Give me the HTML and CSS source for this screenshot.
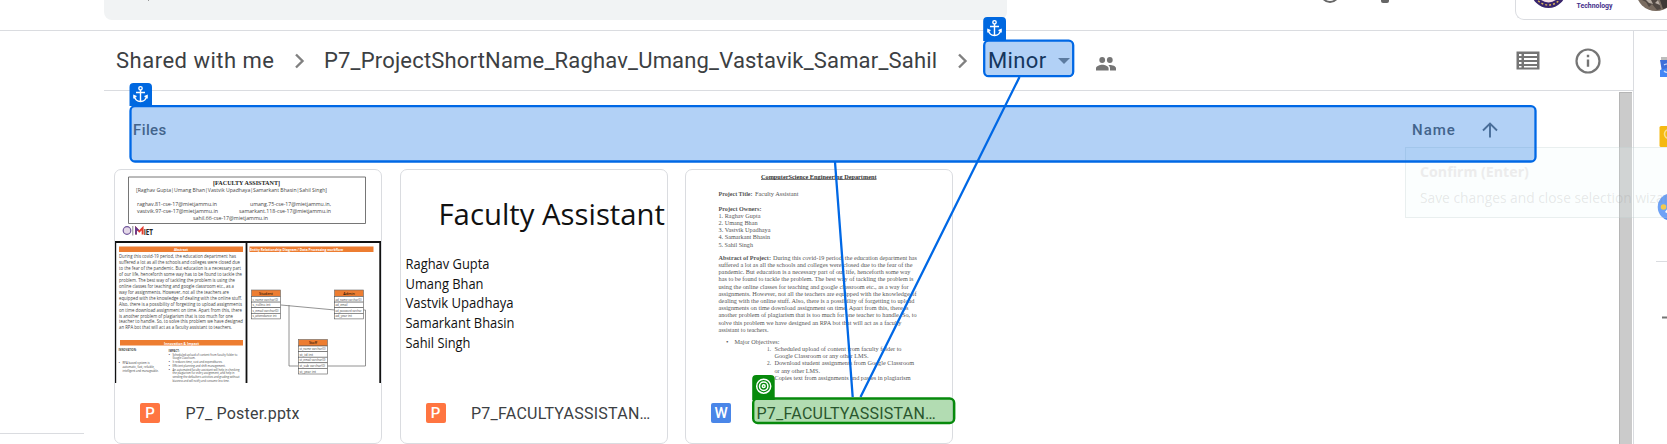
FILE: index.html
```html
<!DOCTYPE html>
<html lang="en">
<head>
<meta charset="utf-8">
<title>Minor - Drive</title>
<link rel="stylesheet" href="styles.css">
</head>
<body>
<header class="top">
  <div class="search"><i class="cursor"></i></div>
  <svg class="top-icons" width="90" height="6" viewBox="1310 0 90 6"><circle cx="1330" cy="-7" r="9" fill="none" stroke="#666" stroke-width="2"/><path d="M1381 0v1q0 2 2 2h4q2 0 2-2v-1" fill="#666"/></svg>
  <div class="account">
    <svg width="152" height="19" viewBox="1515 0 152 19">
      <circle cx="1547.500" cy="-9.500" r="17.500" fill="#38246c"/>
      <circle cx="1547.500" cy="-9.500" r="14.500" fill="none" stroke="#d9b45a" stroke-width="1.500" stroke-dasharray="2 2"/>
      <circle cx="1547.500" cy="-9.500" r="12" fill="#f4dfe4"/>
      <text x="1575.500" y="7.500" textLength="36" lengthAdjust="spacingAndGlyphs" class="logo-text">Technology</text>
      <circle cx="1655" cy="-9" r="20" fill="#796c60"/>
      <path d="M1641 0l4 2 3 5 3-3 5 6 4-1-3-9z" fill="#4f4741"/><path d="M1645 0h5l2 4-4-1zM1654 3l3-3 2 5z" fill="#b6aca2"/><path d="M1659 0h8v7l-5 2z" fill="#3f3936"/>
    </svg>
  </div>
</header>
<div class="body">
  <aside class="nav"><div class="nav-rule"></div></aside>
  <main class="main">
    <div class="crumbs">
      <span class="crumb c1">Shared with me</span>
      <svg class="chev" width="10" height="16" viewBox="0 0 10 16"><path d="M1 1.500L7.500 8 1 14.500" fill="none" stroke="#808080" stroke-width="2.400"/></svg>
      <span class="crumb c2">P7_ProjectShortName_Raghav_Umang_Vastavik_Samar_Sahil</span>
      <svg class="chev" width="10" height="16" viewBox="0 0 10 16"><path d="M1 1.500L7.500 8 1 14.500" fill="none" stroke="#808080" stroke-width="2.400"/></svg>
      <span class="crumb c3">Minor</span>
      <svg class="caret" width="12" height="6" viewBox="0 0 12 6"><path d="M0 0h12L6 6z" fill="#858585"/></svg>
      <svg class="people" width="20" height="14" viewBox="0 0 20 14"><g fill="#757575"><circle cx="6.200" cy="3" r="2.900"/><circle cx="13.800" cy="3" r="2.900"/><path d="M0 13.500v-2.200C0 9 4 7.800 6.300 7.800s6.300 1.200 6.300 3.500v2.200zM14 13.500v-2.200c0-1.400-.7-2.500-1.700-3.300C15.500 7.600 20 8.800 20 11.300v2.200z"/></g></svg>
      <span class="spacer"></span>
      <svg width="24" height="19" viewBox="0 0 24 19"><path d="M.5.500h23v18H.5z" fill="#757575"/><path d="M3 3h2.500v2H3zM8 3h13v2H8zM3 7h2.500v2H3zM8 7h13v2H8zM3 11h2.500v2H3zM8 11h13v2H8zM3 15h2.500v1.500H3zM8 15h13v1.500H8z" fill="#fff"/></svg>
      <svg class="info" width="26" height="26" viewBox="0 0 26 26"><circle cx="13" cy="13" r="11.500" fill="none" stroke="#757575" stroke-width="2.200"/><path d="M11.800 6.800h2.400v2.400h-2.400zM11.800 11.600h2.400v7.200h-2.400z" fill="#757575"/></svg>
    </div>
    <div class="content">
      <div class="list">
        <div class="list-head">
          <span class="files">Files</span><span class="name">Name</span>
          <svg width="16" height="16" viewBox="0 0 16 16"><path d="M8 15.500V2M1 8.500L8 1.500l7 7" fill="none" stroke="#69717b" stroke-width="1.900"/></svg>
        </div>
        <div class="cards">
          <article class="card">
            <svg class="thumb" viewBox="115 170 266 213" id="poster"></svg>
            <div class="label"><b class="type ppt">P</b><span class="file f1">P7_ Poster.pptx</span></div>
          </article>
          <article class="card">
            <svg class="thumb calibri" viewBox="401 170 266 213" fill="#111">
              <text x="438.500" y="224.500" font-size="29.500" textLength="226.500" lengthAdjust="spacingAndGlyphs">Faculty Assistant</text>
              <g font-size="13.700"><text x="405.500" y="269" textLength="84" lengthAdjust="spacingAndGlyphs">Raghav Gupta</text>
              <text x="405.500" y="288.500" textLength="78" lengthAdjust="spacingAndGlyphs">Umang Bhan</text>
              <text x="405.500" y="308" textLength="108" lengthAdjust="spacingAndGlyphs">Vastvik Upadhaya</text>
              <text x="405.500" y="327.700" textLength="109" lengthAdjust="spacingAndGlyphs">Samarkant Bhasin</text>
              <text x="405.500" y="347.500" textLength="65" lengthAdjust="spacingAndGlyphs">Sahil Singh</text></g>
            </svg>
            <div class="label"><b class="type ppt">P</b><span class="file f2">P7_FACULTYASSISTAN…</span></div>
          </article>
          <article class="card">
            <svg class="thumb" viewBox="686 170 266 213" id="report"></svg>
            <div class="label"><b class="type doc">W</b><span class="file f2">P7_FACULTYASSISTAN…</span></div>
          </article>
        </div>
      </div>
      <div class="scroll"></div>
    </div>
  </main>
  <aside class="side">
    <svg width="33" height="413" viewBox="1634 31 33 413">
      <path d="M1661 57h6v5h-6z" fill="#bdbdbd"/><path d="M1660 60h7v17h-6.500l1-8z" fill="#3f6fd9"/><path d="M1660 70l7-2v9h-7z" fill="#4486f5"/><path d="M1664 65q3-2 4 0M1664 71q2 2 4 1" fill="none" stroke="#cfe0ff" stroke-width="1.200"/>
      <rect x="1659.500" y="126" width="20" height="21" rx="1.500" fill="#f5b912"/><circle cx="1669" cy="134" r="4.500" fill="none" stroke="#fbe08f" stroke-width="1.500"/>
      <circle cx="1671.500" cy="207" r="13.800" fill="#4f8df5"/><circle cx="1663.500" cy="207" r="2.800" fill="#f6bf26"/><path d="M1665 212l3-4v6z" fill="#fff"/>
      <path d="M1656 261.500h11" stroke="#dadce0"/><path d="M1662 317.500h5" stroke="#757575" stroke-width="2"/>
    </svg>
  </aside>
</div>
<div class="tip"><b>Confirm (Enter)</b><span>Save changes and close selection wizard</span></div>
<svg class="overlay" width="1667" height="444" viewBox="0 0 1667 444">
  <defs><g id="anchor" fill="none" stroke="#fff" stroke-width="1.400"><circle cx="0" cy="-6.200" r="1.700"/><path d="M0-4.500V7M-4.500-2h9M-6 1.500C-5.500 5-3 7 0 7s5.500-2 6-5.500M-6.600 4v-3l2.600 1.200M6.600 4v-3L4 2.200"/></g></defs>
  <g stroke="#0068e5" stroke-width="2.300">
    <rect x="130.500" y="106.200" width="1405" height="55.300" rx="4.500" fill="#0068e0" fill-opacity=".3"/>
    <rect x="984.200" y="40.700" width="89" height="35.500" rx="4.500" fill="#0068e0" fill-opacity=".3"/>
    <path d="M835 162L852.700 397M1019.500 77L860.500 397"/>
  </g>
  <path d="M129.500 106V87q0-4 4-4h14.500q4 0 4 4v19zM983.200 41V21q0-4 4-4h14.800q4 0 4 4v20z" fill="#0068e0"/>
  <use href="#anchor" x="140.500" y="94.500"/><use href="#anchor" x="994.500" y="28.500"/>
  <rect x="753.200" y="398.500" width="201" height="24.500" rx="4.500" fill="#008a00" fill-opacity=".3" stroke="#078a0c" stroke-width="2.400"/>
  <path d="M752.200 400v-21q0-4 4-4h14.500q4 0 4 4v21z" fill="#078a0c"/>
  <g fill="none" stroke="#fff" stroke-width="1.500"><circle cx="763.700" cy="386.200" r="7"/><circle cx="763.700" cy="386.200" r="4.200"/><circle cx="763.700" cy="386.200" r="1.400"/></g>
</svg>
<script src="thumbs.js"></script>
</body>
</html>
```
FILE: styles.css
```css
* { box-sizing: border-box; }
body { margin: 0; width: 1667px; height: 444px; overflow: hidden; background: #fff; font-family: Roboto, sans-serif; display: flex; flex-direction: column; position: relative; }
svg { display: block; flex: none; }
.top { height: 31px; flex: none; border-bottom: 1px solid #dadce0; display: flex; align-items: flex-start; padding-left: 104px; }
.search { width: 903px; height: 20px; background: #f1f3f4; border-radius: 0 0 8px 8px; padding-left: 44px; }
.cursor { display: block; width: 1px; height: 1px; background: #999; }
.top-icons { margin-left: 303px; }
.account { margin-left: 115px; width: 152px; height: 20px; border: solid #dadce0; border-width: 0 0 1px 1px; border-radius: 0 0 0 9px; overflow: hidden; }
.logo-text { font: bold 6.5px Roboto, sans-serif; fill: #45308b; }
.body { flex: 1; display: flex; min-height: 0; }
.nav { width: 104px; display: flex; align-items: flex-end; padding-bottom: 10px; }
.nav-rule { width: 84px; height: 1px; background: #dadce0; }
.main { width: 1530px; border-right: 1px solid #dadce0; display: flex; flex-direction: column; }
.crumbs { height: 60px; flex: none; border-bottom: 1px solid #dadce0; display: flex; align-items: center; padding-left: 12px; }
.crumb { font-size: 22px; line-height: 28px; color: #3c4043; white-space: nowrap; flex: none; }
.c1 { width: 179px; letter-spacing: .5px; }
.c2 { width: 612px; margin-left: 19px; letter-spacing: .18px; }
.c2 + .chev { margin-left: 22px; }
.c3 { margin-left: 20px; width: 60px; letter-spacing: .35px; color: #202124; }
.caret { margin-left: 10px; }
.people { margin: 6px 0 0 26px; }
.spacer { flex: 1; }
.info { margin: 0 32px 0 35px; }
.content { flex: 1; display: flex; min-height: 0; }
.list { flex: 1; padding-left: 10px; }
.list-head { height: 78px; display: flex; align-items: center; padding: 0 0 0 19px; font-size: 15px; font-weight: 500; color: #5f6368; }
.files { width: 1279px; letter-spacing: .4px; }
.name { width: 70px; letter-spacing: 1px; }
.cards { display: flex; gap: 17.500px; }
.card { width: 268px; height: 275px; border: 1px solid #dadce0; border-radius: 7px; overflow: hidden; }
.thumb { width: 266px; height: 213px; }
.label { height: 60px; display: flex; align-items: center; padding-left: 25px; }
.type { width: 20px; height: 20px; border-radius: 2px; color: #fff; font-size: 15px; line-height: 20px; text-align: center; font-weight: 500; }
.ppt { background: #ff7541; }
.doc { background: #4a86e8; }
.file { margin-left: 25.5px; font-size: 16px; color: #3c4043; white-space: nowrap; }
.f1 { letter-spacing: .2px; }
.f2 { letter-spacing: .25px; }
.scroll { width: 13px; margin: 1px 0 0; background: #cbcbcb; border: solid #b5b5b5; border-width: 1px 0 0 1px; margin-right: 1px; }
.side { width: 33px; }
.calibri, #poster { font-family: "Open Sans", sans-serif; }
#report { font-family: "Liberation Serif", serif; fill: #555; }
.tip { position: absolute; left: 1405px; top: 147px; width: 300px; height: 71px; padding: 13px 14px; border: 1px solid rgba(180,195,195,.25); background: rgba(235,250,248,.2); color: #ececec; font: 14px/22px "Open Sans", sans-serif; display: flex; flex-direction: column; gap: 4px; white-space: nowrap; }
.tip b { font-size: 14.2px; }
.tip span { font-size: 13.8px; color: rgba(130,130,130,.18); }
.overlay { position: absolute; left: 0; top: 0; }
```
FILE: thumbs.js
```js
// Each row: text, x, baseline, width, font size, optional weight, fill and family.
function draw(id, rows) {
  const svg = document.getElementById(id);
  for (const [text, x, y, width, size, weight, fill, family] of rows) {
    const el = document.createElementNS('http://www.w3.org/2000/svg', 'text');
    el.textContent = text;
    el.setAttribute('x', x);
    el.setAttribute('y', y);
    el.setAttribute('font-size', size);
    el.setAttribute('textLength', width);
    el.setAttribute('lengthAdjust', 'spacingAndGlyphs');
    if (weight) el.setAttribute('font-weight', weight);
    if (fill) el.setAttribute('fill', fill);
    if (family) el.setAttribute('font-family', family);
    svg.appendChild(el);
  }
}

function table(x, y, w, title, fields) {
  let s = `<rect x="${x}" y="${y}" width="${w}" height="6.500" fill="#ed7d31" stroke="#666" stroke-width=".6"/>`;
  fields.forEach((f, i) => {
    const len = Math.min(w - 3, f.length * 1.500);
    s += `<rect x="${x}" y="${y + 6.500 + i * 5.600}" width="${w}" height="5.600" fill="#fff" stroke="#555" stroke-width=".6"/>`;
    s += `<text x="${x + 1}" y="${y + 10.600 + i * 5.600}" font-size="3.200" fill="#444" textLength="${len}" lengthAdjust="spacingAndGlyphs">${f}</text>`;
  });
  return s + `<text x="${x + w / 2}" y="${y + 4.700}" font-size="3.800" text-anchor="middle">${title}</text>`;
}

document.getElementById('poster').innerHTML =
  '<path d="M128.500 177h237v46.500h-237z" fill="none" stroke="#666" stroke-width=".9"/>' +
  '<path d="M115 242h266M115.300 242v141M246.500 242v141M380.200 242v141" stroke="#111" stroke-width="1.800" fill="none"/>' +
  '<path d="M119 246.500h124v5.500h-124zM249.500 246.500h124v5.500h-124zM120 340h123v5.500h-123z" fill="#ed7d31"/>' +
  '<circle cx="127" cy="230.500" r="3.800" fill="#e4d8e8" stroke="#70579b" stroke-width="1.200"/><path d="M132.800 226v9.500" stroke="#555" stroke-width=".7"/>' +
  '<path d="M136 234.500v-6.500l3.300 3.300 3.300-3.300v6.500" fill="none" stroke="#e33b2f" stroke-width="1.900"/><path d="M136 234.500v-6.500l2.500 2.500" fill="none" stroke="#5c3b94" stroke-width="1.700"/>' +
  '<path d="M281 305l54 5M289 305v61h9M363 310h2.500v56h-38" fill="none" stroke="#777" stroke-width=".8"/>' +
  table(251.500, 290, 29, 'Student', ['s_name varchar(0)', 's_rollno int', 's_email varchar(0)', 's_attendance int']) +
  table(334.500, 290, 29, 'Admin', ['ad_name varchar(0)', 'ad_email', 'ad_password varchar', 'ad_year int']) +
  table(298.500, 339.500, 29, 'Staff', ['st_name varchar(0)', 'st_id int', 'st_email varchar(0)', 'st_sub varchar(0)', 'st_year int']);

const g = '#444';
draw('poster', [
  ['[FACULTY ASSISTANT]', 213, 184.500, 67, 6.300, 'bold', '#222', 'Liberation Serif'],
  ['[Raghav Gupta|Umang Bhan|Vastvik Upadhaya|Samarkant Bhasin|Sahil Singh]', 136, 191.800, 191, 6.100, '', g],
  ['raghav.81-cse-17@mietjammu.in', 137, 205.500, 80, 6, '', g],
  ['umang.75-cse-17@mietjammu.in,', 250, 205.500, 81, 6, '', g],
  ['vastvik.97-cse-17@mietjammu.in', 137, 212.500, 81, 6, '', g],
  ['samarkant.118-cse-17@mietjammu.in', 239, 212.500, 92, 6, '', g],
  ['sahil.66-cse-17@mietjammu.in', 193, 219.500, 75, 6, '', g],
  ['IET', 143.700, 234.500, 9.300, 8.700, 'bold', '#222'],
  ['Abstract', 174, 251, 14, 4, 'bold', '#fff'],
  ['Entity Relationship Diagram / Data Processing workflow', 250, 251, 93, 4, 'bold', '#fff'],
  ['During this covid-19 period, the education department has', 119, 258.300, 117, 4.900, '', g],
  ['suffered a lot as all the schools and colleges were closed due', 119, 264.300, 121, 4.900, '', g],
  ['to the fear of the pandemic. But education is a necessary part', 119, 270.200, 122, 4.900, '', g],
  ['of our life, henceforth some way has to be found to tackle the', 119, 276.100, 123, 4.900, '', g],
  ['problem. The best way of tackling the problem is using the', 119, 282, 116, 4.900, '', g],
  ['online classes for teaching and google classroom etc., as a', 119, 288, 115, 4.900, '', g],
  ['way for assignments. However, not all the teachers are', 119, 293.900, 110, 4.900, '', g],
  ['equipped with the knowledge of dealing with the online stuff.', 119, 299.800, 123, 4.900, '', g],
  ['Also, there is a possibility of forgetting to upload assignments', 119, 305.500, 123, 4.900, '', g],
  ['on time download assignment on time. Apart from this, there', 119, 311.500, 123, 4.900, '', g],
  ['is another problem of plagiarism that is too much for one', 119, 317.500, 114, 4.900, '', g],
  ['teacher to handle. So, to solve this problem we have designed', 119, 323.300, 124, 4.900, '', g],
  ['an RPA bot that will act as a faculty assistant to teachers.', 119, 329, 113, 4.900, '', g],
  ['Innovation & Impact', 164, 344.500, 35, 4.200, 'bold', '#fff'],
  ['INNOVATION:', 118.500, 351, 18, 3.300, 'bold', g],
  ['IMPACT:', 168.500, 352, 11, 3.300, 'bold', g],
  ['•', 118.500, 363.500, 1.500, 3.300, '', g],
  ['RPA based system is', 122.500, 363.500, 27, 3.300, '', g],
  ['automatic, fast, reliable,', 122.500, 367.500, 32, 3.300, '', g],
  ['intelligent and manageable.', 122.500, 371.500, 36, 3.300, '', g],
  ['•', 168.500, 355.500, 1.500, 3.300, '', g],
  ['Scheduled upload of content from faculty folder to', 172.500, 355.500, 65, 3.300, '', g],
  ['Google Classroom.', 172.500, 359.300, 23, 3.300, '', g],
  ['•', 168.500, 363.200, 1.500, 3.300, '', g],
  ['It reduces time, cost and expenditures.', 172.500, 363.200, 50, 3.300, '', g],
  ['•', 168.500, 367, 1.500, 3.300, '', g],
  ['Efficient planning and shift management.', 172.500, 367, 53, 3.300, '', g],
  ['•', 168.500, 370.700, 1.500, 3.300, '', g],
  ['An automated faculty assistant will help in checking', 172.500, 370.700, 67, 3.300, '', g],
  ['the plagiarism for every assignment, and help in', 172.500, 374.300, 62, 3.300, '', g],
  ['sending the defaulters activities and grading without', 172.500, 378, 67, 3.300, '', g],
  ['biasness and will notify and consume less time.', 172.500, 381.700, 57, 3.300, '', g]
]);

document.getElementById('report').innerHTML =
  '<path d="M761 179.500h115.500" stroke="#444" stroke-width=".7"/>';
draw('report', [
  ['ComputerScience Engineering Department', 761, 178.500, 115.500, 6.500, 'bold', '#333'],
  ['Project Title:', 718.500, 196.300, 34, 6.500, 'bold'],
  ['Faculty Assistant', 755, 196.300, 43.500, 6.500],
  ['Project Owners:', 718.500, 210.500, 43, 6.500, 'bold'],
  ['1. Raghav Gupta', 718.500, 217.800, 42, 6.500],
  ['2. Umang Bhan', 718.500, 225, 39, 6.500],
  ['3. Vastvik Upadhaya', 718.500, 232, 52, 6.500],
  ['4. Samarkant Bhasin', 718.500, 239.200, 51.500, 6.500],
  ['5. Sahil Singh', 718.500, 246.500, 34.500, 6.500],
  ['Abstract of Project:', 718.500, 260, 52.500, 6.500, 'bold'],
  ['During this covid-19 period, the education department has', 773, 260, 144, 6.500],
  ['suffered a lot as all the schools and colleges were closed due to the fear of the', 718.500, 267, 194, 6.500],
  ['pandemic. But education is a necessary part of our life, henceforth some way', 718.500, 274.200, 192, 6.500],
  ['has to be found to tackle the problem. The best way of tackling the problem is', 718.500, 281.400, 195, 6.500],
  ['using the online classes for teaching and google classroom etc., as a way for', 718.500, 288.500, 190, 6.500],
  ['assignments. However, not all the teachers are equipped with the knowledge of', 718.500, 295.700, 198, 6.500],
  ['dealing with the online stuff. Also, there is a possibility of forgetting to upload', 718.500, 303, 196, 6.500],
  ['assignments on time download assignment on time. Apart from this, there is', 718.500, 310, 190, 6.500],
  ['another problem of plagiarism that is too much for one teacher to handle. So, to', 718.500, 317.300, 198, 6.500],
  ['solve this problem we have designed an RPA bot that will act as a faculty', 718.500, 324.500, 183, 6.500],
  ['assistant to teachers.', 718.500, 331.500, 50, 6.500],
  ['•', 726, 343.500, 2.500, 6.500],
  ['Major Objectives:', 734.500, 343.500, 45, 6.500],
  ['1.', 767, 351, 4, 6.500],
  ['Scheduled upload of content from faculty folder to', 774.500, 351, 127, 6.500],
  ['Google Classroom or any other LMS.', 774.500, 358, 94, 6.500],
  ['2.', 767, 365.300, 4, 6.500],
  ['Download student assignments from Google Classroom', 774.500, 365.300, 139.500, 6.500],
  ['or any other LMS.', 774.500, 372.500, 45.500, 6.500],
  ['Copies text from assignments and pastes in plagiarism', 774.500, 380, 136, 6.500]
]);
```
